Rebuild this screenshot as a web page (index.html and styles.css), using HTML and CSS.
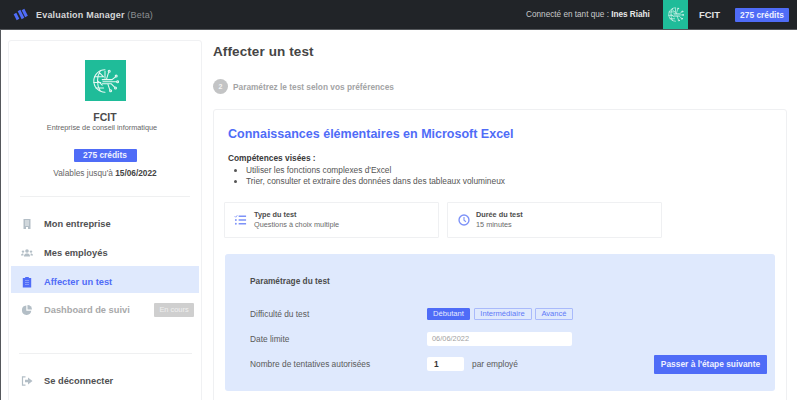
FILE: index.html
```html
<!DOCTYPE html>
<html lang="fr">
<head>
<meta charset="utf-8">
<title>Evaluation Manager</title>
<link rel="stylesheet" href="styles.css">
</head>
<body>
<header class="topbar">
  <svg class="brand-logo" viewBox="0 0 15 13" width="15" height="13"><path d="M2 5.500 5 11.500M6 2.500 10 10.500M10 1.500 13.500 8.500" fill="none" stroke="#4f6cf7" stroke-width="3"/></svg>
  <span class="brand-name">Evaluation Manager <span class="brand-beta">(Beta)</span></span>
  <span class="connected">Connecté en tant que : <b>Ines Riahi</b></span>
  <span class="company-tile">
    <svg viewBox="0 0 40 40" width="17" height="17" class="globe"><use href="#globe"/></svg>
  </span>
  <span class="company-name">FCIT</span>
  <span class="credits credits-top">275 crédits</span>
</header>
<svg class="defs" width="0" height="0">
  <defs>
    <g id="globe" fill="none" stroke="#e6f7f2" stroke-width="1.500" stroke-linecap="round">
      <path d="M20 4A16 16 0 0 0 20 36"/>
      <path d="M13 6C8 14 8 26 13 34M5 14H17M4 22H14M7 30H18M12 8 18 14M10 20 16 26"/>
      <path d="M16 18H30L35 14M17 21H37M16 24H29L34 29M22 18 25 8M20 16 20 6M24 24 27 33"/>
      <circle cx="36" cy="13" r="1.400"/><circle cx="38" cy="21" r="1.400"/><circle cx="35" cy="30" r="1.400"/><circle cx="26" cy="6" r="1.400"/><circle cx="28" cy="34" r="1.400"/>
    </g>
  </defs>
</svg>
<div class="layout">
  <aside class="sidebar">
    <div class="profile">
      <div class="logo-tile"><svg viewBox="0 0 40 40" width="28" height="28"><use href="#globe"/></svg></div>
      <div class="org-name">FCIT</div>
      <div class="org-desc">Entreprise de conseil informatique</div>
      <div class="credits credits-side">275 crédits</div>
      <div class="validity">Valables jusqu'à <b>15/06/2022</b></div>
    </div>
    <nav class="menu">
      <a class="menu-item">
        <svg class="menu-icon" viewBox="0 0 12 12" width="12" height="12"><path d="M2.500 1H9.500V11H7V9H5V11H2.500Z" fill="#b3bec6"/><path d="M4 3H8M4 5H8M4 7H8" stroke="#fff" stroke-width=".8"/></svg>
        <span>Mon entreprise</span>
      </a>
      <a class="menu-item">
        <svg class="menu-icon" viewBox="0 0 12 12" width="12" height="12" fill="#b3bec6"><circle cx="6" cy="4" r="1.800"/><circle cx="2" cy="4.600" r="1.200"/><circle cx="10" cy="4.600" r="1.200"/><path d="M3 9.500C3 7 4.500 6.500 6 6.500S9 7 9 9.500Z M0 8.500C0 7 1 6.500 2.300 6.500L2.500 8.500Z M12 8.500C12 7 11 6.500 9.700 6.500L9.500 8.500Z"/></svg>
        <span>Mes employés</span>
      </a>
      <a class="menu-item is-active">
        <svg class="menu-icon" viewBox="0 0 12 12" width="12" height="12"><path d="M1.800 2H4.200V1H7.800V2H10.200V11.500H1.800Z" fill="#4f6cf7"/><path d="M4 4.500H8M4 6.500H8M4 8.500H8" stroke="#9db0fa" stroke-width=".7"/></svg>
        <span>Affecter un test</span>
      </a>
      <a class="menu-item is-disabled">
        <svg class="menu-icon" viewBox="0 0 12 12" width="12" height="12" fill="#b3bec6"><path d="M5.300 1.500A4.700 4.700 0 1 0 10.300 6.800H5.300Z"/><path d="M6.500 1A4.500 4.500 0 0 1 11 5.500H6.500Z"/></svg>
        <span>Dashboard de suivi</span>
        <span class="soon">En cours</span>
      </a>
    </nav>
    <hr class="divider divider-low">
    <a class="menu-item logout">
      <svg class="menu-icon" viewBox="0 0 12 12" width="12" height="12"><path d="M4.500 1.800H1.500V10.200H4.500" fill="none" stroke="#b3bec6" stroke-width="1.200"/><path d="M4 4.700H7V2.500L11.500 6 7 9.500V7.300H4Z" fill="#b3bec6"/></svg>
      <span>Se déconnecter</span>
    </a>
  </aside>
  <main class="content">
    <h1 class="page-title">Affecter un test</h1>
    <div class="step"><span class="step-num">2</span><span>Paramétrez le test selon vos préférences</span></div>
    <section class="card">
      <h2 class="test-title">Connaissances élémentaires en Microsoft Excel</h2>
      <div class="skills">
        <b>Compétences visées :</b>
        <ul>
          <li>Utiliser les fonctions complexes d'Excel</li>
          <li>Trier, consulter et extraire des données dans des tableaux volumineux</li>
        </ul>
      </div>
      <div class="facts">
        <div class="fact">
          <svg class="fact-icon-list" viewBox="0 0 14 12" width="13" height="12"><path d="M5 2H13M5 6H13M5 10H13" stroke="#7d92f8" stroke-width="1.600"/><path d="M.8 2 1.800 3 3.500 1" fill="none" stroke="#7d92f8" stroke-width="1"/><circle cx="2" cy="6" r="1" fill="#7d92f8"/><circle cx="2" cy="10" r="1" fill="#7d92f8"/></svg>
          <div><div class="fact-label">Type du test</div><div class="fact-value">Questions à choix multiple</div></div>
        </div>
        <div class="fact">
          <svg viewBox="0 0 14 14" width="12" height="12"><circle cx="7" cy="7" r="5.800" fill="none" stroke="#7d92f8" stroke-width="1.600"/><path d="M7 3.500V7.300L9.300 9" fill="none" stroke="#7d92f8" stroke-width="1.300"/></svg>
          <div><div class="fact-label">Durée du test</div><div class="fact-value">15 minutes</div></div>
        </div>
      </div>
      <div class="settings">
        <div class="settings-title">Paramétrage du test</div>
        <div class="row row-first">
          <div class="row-label">Difficulté du test</div>
          <div class="levels">
            <span class="level level-easy is-selected">Débutant</span>
            <span class="level level-mid">Intermédiaire</span>
            <span class="level level-hard">Avancé</span>
          </div>
        </div>
        <div class="row">
          <div class="row-label">Date limite</div>
          <div class="date-field">06/06/2022</div>
        </div>
        <div class="row row-last">
          <div class="row-label">Nombre de tentatives autorisées</div>
          <div class="count-field">1</div>
          <span class="per">par employé</span>
          <span class="next">Passer à l'étape suivante</span>
        </div>
      </div>
    </section>
  </main>
</div>
</body>
</html>
```
FILE: styles.css
```css
* { box-sizing: border-box; }
html, body { height: 100%; }
body {
  margin: 0;
  height: 400px;
  overflow: hidden;
  background: #fff;
  color: #4a4a4a;
  font-family: "Liberation Sans", Arial, sans-serif;
  font-size: 8px;
}
b { font-weight: 700; }
.defs { position: absolute; }

.topbar {
  display: flex;
  align-items: center;
  height: 30px;
  padding-left: 13px;
  background: #212428;
  border-bottom: 1px solid #55585c;
  color: #d8d9da;
}
.brand-logo { flex: none; }
.brand-name { margin-left: 8px; font-size: 9px; font-weight: 700; letter-spacing: .2px; color: #d6d7d8; }
.brand-beta { font-weight: 400; color: #8d8f92; }
.connected { margin-left: auto; font-size: 8.200px; color: #c8c9ca; }
.connected b { color: #e8e8e8; }
.company-tile {
  display: flex;
  align-items: center;
  justify-content: center;
  width: 25px;
  height: 29px;
  margin-left: 13px;
  background: #1fbc99;
}
.company-name { margin-left: 11px; margin-right: 15px; font-size: 9.500px; font-weight: 700; color: #e2e3e3; }
.credits {
  display: inline-block;
  background: #4f6cf7;
  border-radius: 1px;
  color: #eef0ff;
  font-weight: 700;
  font-size: 8px;
  text-align: center;
}
.credits-top { width: 54px; height: 14px; line-height: 14px; margin-right: 8px; font-size: 8.400px; }

.layout {
  display: flex;
  gap: 11px;
  height: 370px;
  padding: 10px 10px 0 8px;
  border-left: 1px solid #55585c;
}
.sidebar {
  display: flex;
  flex-direction: column;
  flex: none;
  width: 194px;
  margin-left: -1px;
  height: 380px;
  padding: 0 2px;
  border: 1px solid #f0f1f3;
  border-radius: 3px;
}
.profile {
  display: flex;
  flex-direction: column;
  align-items: center;
  height: 156px;
  margin: 0 9px;
  padding-top: 19px;
  border-bottom: 1px solid #eff0f1;
}
.logo-tile {
  display: flex;
  align-items: center;
  justify-content: center;
  width: 41px;
  height: 41px;
  background: #1fbc99;
}
.org-name { margin-top: 10px; font-size: 10.500px; font-weight: 700; color: #4b4b4b; line-height: 12px; }
.org-desc { font-size: 7.300px; line-height: 9px; color: #666; margin-right: 6px; }
.credits-side { width: 63px; height: 13px; line-height: 13px; margin-top: 17px; font-size: 8.400px; }
.validity { margin-top: 6px; font-size: 8.300px; line-height: 10px; color: #666; }
.validity b { color: #444; }

.menu { padding-top: 13px; }
.menu-item {
  display: flex;
  align-items: center;
  height: 28.500px;
  padding-left: 10px;
  font-size: 9.300px;
  font-weight: 700;
  color: #4f5052;
}
.menu-icon { flex: none; margin-right: 11px; }
.menu-item.is-active {
  height: 27px;
  margin-top: -.75px;
  padding-top: 4px;
  background: #dfe9fd;
  color: #4f6cf7;
}
.menu-item.is-disabled { margin-top: 2px; color: #a8a9aa; }
.soon {
  margin-left: auto;
  margin-right: 5px;
  width: 40px;
  height: 14px;
  line-height: 14px;
  background: #cfcfcf;
  border-radius: 1px;
  text-align: center;
  color: #f0f0f0;
  font-size: 7.400px;
  font-weight: 400;
}
.divider { width: 173px; margin: 29px 0 0 8px; border: 0; border-top: 1px solid #eff0f1; }
.logout { margin-top: 13px; }

.content { flex: 1; min-width: 0; }
.page-title { margin: 4px 0 0; font-size: 13.500px; line-height: 16px; font-weight: 700; color: #454545; letter-spacing: .1px; }
.step { display: flex; align-items: center; gap: 5px; margin-top: 19px; font-size: 8.300px; font-weight: 700; color: #a3a4a5; }
.step-num {
  width: 15px;
  height: 15px;
  line-height: 15px;
  border-radius: 50%;
  background: #c3c4c5;
  color: #f3f3f3;
  text-align: center;
  font-size: 7px;
}
.card {
  height: 300px;
  margin-top: 15px;
  padding: 16px 11px 0;
  border: 1px solid #eff0f2;
  border-radius: 3px;
}
.test-title { margin: 0 0 0 3px; font-size: 12.500px; line-height: 16px; font-weight: 700; color: #4f6cf7; }
.skills { margin: 11px 0 0 3px; font-size: 8.350px; line-height: 11.500px; color: #555; }
.skills b { color: #3a3a3a; }
.skills ul { margin: 0; padding-left: 18px; }
.facts { display: flex; gap: 8px; margin-top: 14px; margin-left: -1px; }
.fact {
  display: flex;
  align-items: center;
  gap: 6px;
  width: 215px;
  height: 36px;
  padding-left: 10px;
  border: 1px solid #eff0f2;
  border-radius: 1px;
  font-size: 7.300px;
  line-height: 10px;
}
.fact-icon-list { margin: 0 1px 0 -1px; }
.fact-label { font-weight: 700; color: #4c4c4c; }
.fact-value { color: #6a6a6a; }
.settings {
  height: 137px;
  margin-top: 16px;
  padding: 22px 8px 0 25px;
  background: #dfe9fd;
  border-radius: 3px;
}
.settings-title { font-size: 8.300px; font-weight: 700; line-height: 11px; color: #4c4c4c; margin-bottom: 15px; }
.row { display: flex; align-items: center; height: 25px; font-size: 8.350px; color: #5a5a5a; }
.row-label { width: 177px; flex: none; }
.levels { display: flex; gap: 3.500px; }
.level {
  height: 12px;
  line-height: 10px;
  border: 1px solid #a9bafb;
  border-radius: 1px;
  color: #6079f7;
  font-size: 7.600px;
  text-align: center;
}
.level-easy { width: 43px; }
.level-mid { width: 58px; }
.level-hard { width: 38px; }
.level.is-selected { background: #4f6cf7; border-color: #4f6cf7; color: #e6ebff; }
.date-field {
  width: 145px;
  height: 14px;
  line-height: 14px;
  padding-left: 5px;
  background: #fff;
  border-radius: 2px;
  color: #a2a2a2;
  font-size: 7.400px;
}
.count-field {
  width: 37px;
  height: 14px;
  line-height: 14px;
  padding-left: 7px;
  background: #fff;
  border-radius: 2px;
  color: #333;
  font-weight: 700;
}
.per { margin-left: 8px; color: #5a5a5a; }
.next {
  margin-left: auto;
  width: 113px;
  height: 19px;
  line-height: 19px;
  background: #4f6cf7;
  border-radius: 1px;
  color: #eef0ff;
  text-align: center;
  font-weight: 700;
  font-size: 8.400px;
}
```
